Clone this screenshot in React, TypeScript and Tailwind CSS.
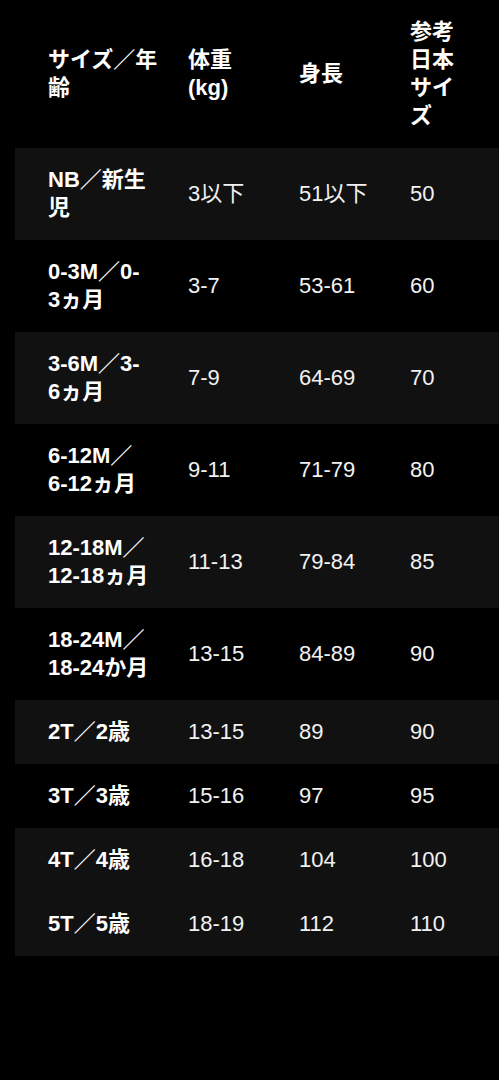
import React from 'react';

type Row = {
  size: string[];
  weight: string;
  height: string;
  jp: string;
  striped: boolean;
};

const ROWS: Row[] = [
  { size: ['NB／新生', '児'], weight: '3以下', height: '51以下', jp: '50', striped: true },
  { size: ['0-3M／0-', '3ヵ月'], weight: '3-7', height: '53-61', jp: '60', striped: false },
  { size: ['3-6M／3-', '6ヵ月'], weight: '7-9', height: '64-69', jp: '70', striped: true },
  { size: ['6-12M／', '6-12ヵ月'], weight: '9-11', height: '71-79', jp: '80', striped: false },
  { size: ['12-18M／', '12-18ヵ月'], weight: '11-13', height: '79-84', jp: '85', striped: true },
  { size: ['18-24M／', '18-24か月'], weight: '13-15', height: '84-89', jp: '90', striped: false },
  { size: ['2T／2歳'], weight: '13-15', height: '89', jp: '90', striped: true },
  { size: ['3T／3歳'], weight: '15-16', height: '97', jp: '95', striped: false },
  { size: ['4T／4歳'], weight: '16-18', height: '104', jp: '100', striped: true },
  { size: ['5T／5歳'], weight: '18-19', height: '112', jp: '110', striped: true },
];

const FONT = { fontFamily: '"Liberation Sans", "Noto Sans CJK JP", sans-serif' };

// one text block, lines given explicitly so the wraps match the original
const Lines = ({ lines }: { lines: string[] }) => (
  <>
    {lines.map((l, i) => (
      <div key={i} className="whitespace-nowrap">{l}</div>
    ))}
  </>
);

export default function App() {
  return (
    <div className="min-h-[1080px] w-[499px] bg-black pl-[15px] text-white overflow-hidden" style={FONT}>
      <div className="grid grid-cols-[140px_111px_111px_1fr] items-center py-[18px] text-[22px] leading-[28px] font-bold">
        <div className="pl-[33px]"><Lines lines={['サイズ／年', '齢']} /></div>
        <div className="pl-[33px]"><Lines lines={['体重', '(kg)']} /></div>
        <div className="pl-[33px]"><Lines lines={['身長']} /></div>
        <div className="pl-[33px]"><Lines lines={['参考', '日本', 'サイ', 'ズ']} /></div>
      </div>

      {ROWS.map((r, i) => (
        <div
          key={i}
          className={`grid grid-cols-[140px_111px_111px_1fr] items-center py-[18px] text-[22px] leading-[28px] ${r.striped ? 'bg-[#111111]' : 'bg-black'}`}
        >
          <div className="pl-[33px] font-bold"><Lines lines={r.size} /></div>
          <div className="pl-[33px] text-[#f2f2f2]">{r.weight}</div>
          <div className="pl-[33px] text-[#f2f2f2]">{r.height}</div>
          <div className="pl-[33px] text-[#f2f2f2]">{r.jp}</div>
        </div>
      ))}
    </div>
  );
}
